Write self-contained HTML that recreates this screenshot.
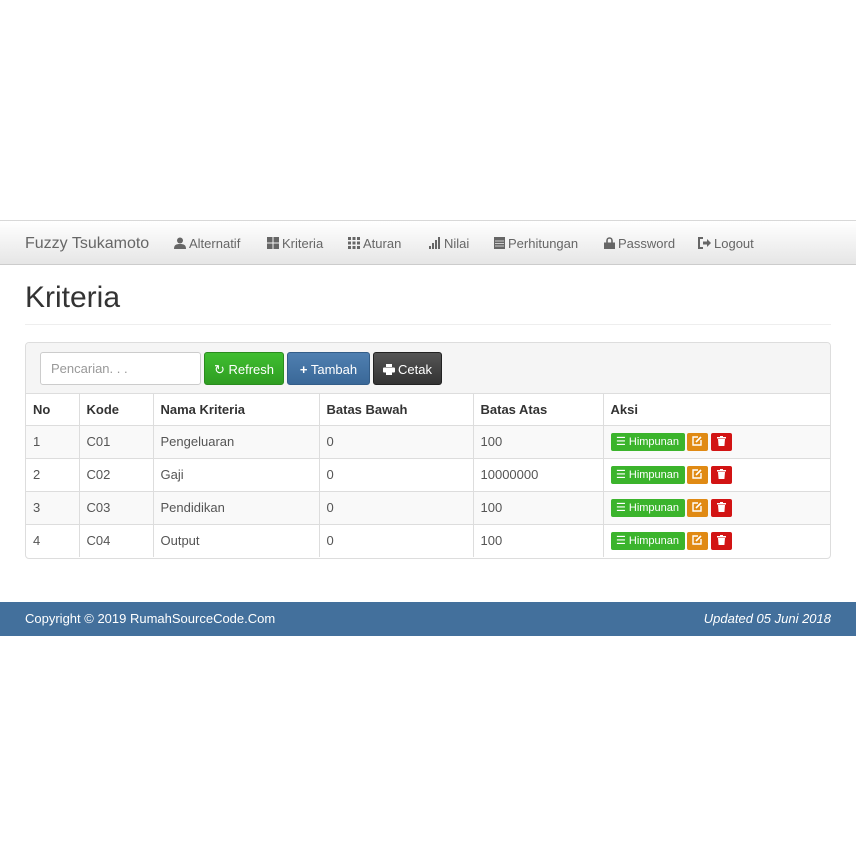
<!DOCTYPE html>
<html><head><meta charset="utf-8"><style>
*{box-sizing:border-box;margin:0;padding:0}
body{width:856px;height:856px;background:#fff;font-family:"Liberation Sans",sans-serif;color:#333;position:relative;overflow:hidden}
.nav{position:absolute;top:220px;left:0;width:856px;height:45px;background:linear-gradient(#fff,#e6e6e6);border-top:1px solid #d8d8d8;border-bottom:1px solid #ccc}
.nav span{position:absolute;top:0;line-height:45px;font-size:13px;color:#666;white-space:nowrap}
.nav .brand{font-size:16px;color:#666}
.ic{display:inline-block;vertical-align:-1px;margin-right:3px}
h1{position:absolute;left:25px;top:281px;font-size:30px;font-weight:normal;color:#333}
.hr{position:absolute;left:25px;top:324px;width:806px;border-top:1px solid #eee}
.panel{position:absolute;left:25px;top:342px;width:806px;height:217px;border:1px solid #ddd;border-radius:4px;background:#fff;overflow:hidden}
.ph{height:51px;background:#f5f5f5;border-bottom:1px solid #ddd;position:relative}
.inp{position:absolute;left:14px;top:9px;width:161px;height:33px;border:1px solid #ccc;border-radius:3px;background:#fff;font-size:13px;color:#999;padding:8px 10px}
.btn{position:absolute;top:9px;height:33px;border-radius:3px;color:#fff;font-size:13px;line-height:33px;text-align:center}
table{border-collapse:collapse;width:804px;font-size:13px}
td,th{border-right:1px solid #ddd;border-bottom:1px solid #ddd;padding:0 7px;text-align:left;vertical-align:middle}
td:last-child,th:last-child{border-right:none}
th{height:31px;font-weight:bold;color:#333}
td{height:33px;color:#555}
tr.o td{background:#f9f9f9}
tr:last-child td{border-bottom:none}
.sb{display:inline-block;height:18px;border-radius:2px;color:#fff;font-size:11px;line-height:18px;vertical-align:middle;text-align:center}
.foot{position:absolute;top:602px;left:0;width:856px;height:34px;background:#43709c;color:#fff;font-size:13px;line-height:34px}
</style></head><body>
<div class="nav">
<span class="brand" style="left:25px">Fuzzy Tsukamoto</span>
<span style="left:174px"><svg class="ic" width="12" height="12" viewBox="0 0 12 12"><circle cx="6" cy="3.5" r="3" fill="#666"/><path d="M0 12c0-4 2-5 6-5s6 1 6 5z" fill="#666"/></svg>Alternatif</span>
<span style="left:267px"><svg class="ic" width="12" height="12" viewBox="0 0 12 12" fill="#666"><rect x="0" y="0" width="5.5" height="5.5"/><rect x="6.5" y="0" width="5.5" height="5.5"/><rect x="0" y="6.5" width="5.5" height="5.5"/><rect x="6.5" y="6.5" width="5.5" height="5.5"/></svg>Kriteria</span>
<span style="left:348px"><svg class="ic" width="12" height="12" viewBox="0 0 12 12" fill="#666"><rect x="0" y="0" width="3" height="3"/><rect x="4.5" y="0" width="3" height="3"/><rect x="9" y="0" width="3" height="3"/><rect x="0" y="4.5" width="3" height="3"/><rect x="4.5" y="4.5" width="3" height="3"/><rect x="9" y="4.5" width="3" height="3"/><rect x="0" y="9" width="3" height="3"/><rect x="4.5" y="9" width="3" height="3"/><rect x="9" y="9" width="3" height="3"/></svg>Aturan</span>
<span style="left:429px"><svg class="ic" width="12" height="12" viewBox="0 0 12 12" fill="#666"><rect x="0" y="9" width="2" height="3"/><rect x="3" y="6" width="2" height="6"/><rect x="6" y="3" width="2" height="9"/><rect x="9" y="0" width="2" height="12"/></svg>Nilai</span>
<span style="left:494px"><svg class="ic" width="11" height="12" viewBox="0 0 11 12" fill="#666"><rect x="0" y="0" width="11" height="12"/><path d="M1 4h9M1 6.5h9M1 9h9" stroke="#eee" stroke-width=".8"/></svg>Perhitungan</span>
<span style="left:604px"><svg class="ic" width="11" height="12" viewBox="0 0 11 12"><path d="M3 6V3.5a2.5 2.5 0 015 0V6" stroke="#666" stroke-width="1.6" fill="none"/><rect x="0" y="5.5" width="11" height="6.5" fill="#666"/></svg>Password</span>
<span style="left:698px"><svg class="ic" width="13" height="12" viewBox="0 0 13 12"><path d="M5 1H1v10h4" stroke="#666" stroke-width="2" fill="none"/><path d="M5 4.5h4V2l4 4-4 4V7.5H5z" fill="#666"/></svg>Logout</span>
</div>
<h1>Kriteria</h1>
<div class="hr"></div>
<div class="panel">
<div class="ph">
<div class="inp">Pencarian. . .</div>
<div class="btn" style="left:178px;width:80px;background:linear-gradient(#3fbe30,#2f9d22);border:1px solid #2a8b1e">&#x21bb; Refresh</div>
<div class="btn" style="left:261px;width:83px;background:linear-gradient(#4f7fb0,#3a6898);border:1px solid #335d88"><b>+</b> Tambah</div>
<div class="btn" style="left:347px;width:69px;background:linear-gradient(#555,#333);border:1px solid #222"><svg class="ic" width="12" height="11" viewBox="0 0 12 11" fill="#fff"><rect x="3" y="0" width="6" height="3"/><rect x="0" y="3.5" width="12" height="5" rx="1"/><rect x="3" y="7" width="6" height="4"/></svg>Cetak</div>
</div>
<table>
<tr><th style="width:53px">No</th><th style="width:74px">Kode</th><th style="width:166px">Nama Kriteria</th><th style="width:154px">Batas Bawah</th><th style="width:130px">Batas Atas</th><th>Aksi</th></tr>
<tr class="o"><td>1</td><td>C01</td><td>Pengeluaran</td><td>0</td><td>100</td><td><span class="sb" style="width:74px;background:#3bb42c">&#9776; Himpunan</span><span class="sb" style="width:21px;background:#e08a14;margin-left:2px"><svg width="10" height="10" viewBox="0 0 10 10" style="vertical-align:-1px"><path d="M6 1H1v8h8V4" stroke="#fff" stroke-width="1.4" fill="none"/><path d="M4 6l5-5" stroke="#fff" stroke-width="1.6"/></svg></span><span class="sb" style="width:21px;background:#d21414;margin-left:3px"><svg width="9" height="10" viewBox="0 0 9 10" style="vertical-align:-1px" fill="#fff"><rect x="0" y="1" width="9" height="1.5"/><rect x="3" y="0" width="3" height="1"/><path d="M1 3h7l-.6 7H1.6z"/></svg></span></td></tr>
<tr><td>2</td><td>C02</td><td>Gaji</td><td>0</td><td>10000000</td><td><span class="sb" style="width:74px;background:#3bb42c">&#9776; Himpunan</span><span class="sb" style="width:21px;background:#e08a14;margin-left:2px"><svg width="10" height="10" viewBox="0 0 10 10" style="vertical-align:-1px"><path d="M6 1H1v8h8V4" stroke="#fff" stroke-width="1.4" fill="none"/><path d="M4 6l5-5" stroke="#fff" stroke-width="1.6"/></svg></span><span class="sb" style="width:21px;background:#d21414;margin-left:3px"><svg width="9" height="10" viewBox="0 0 9 10" style="vertical-align:-1px" fill="#fff"><rect x="0" y="1" width="9" height="1.5"/><rect x="3" y="0" width="3" height="1"/><path d="M1 3h7l-.6 7H1.6z"/></svg></span></td></tr>
<tr class="o"><td>3</td><td>C03</td><td>Pendidikan</td><td>0</td><td>100</td><td><span class="sb" style="width:74px;background:#3bb42c">&#9776; Himpunan</span><span class="sb" style="width:21px;background:#e08a14;margin-left:2px"><svg width="10" height="10" viewBox="0 0 10 10" style="vertical-align:-1px"><path d="M6 1H1v8h8V4" stroke="#fff" stroke-width="1.4" fill="none"/><path d="M4 6l5-5" stroke="#fff" stroke-width="1.6"/></svg></span><span class="sb" style="width:21px;background:#d21414;margin-left:3px"><svg width="9" height="10" viewBox="0 0 9 10" style="vertical-align:-1px" fill="#fff"><rect x="0" y="1" width="9" height="1.5"/><rect x="3" y="0" width="3" height="1"/><path d="M1 3h7l-.6 7H1.6z"/></svg></span></td></tr>
<tr><td>4</td><td>C04</td><td>Output</td><td>0</td><td>100</td><td><span class="sb" style="width:74px;background:#3bb42c">&#9776; Himpunan</span><span class="sb" style="width:21px;background:#e08a14;margin-left:2px"><svg width="10" height="10" viewBox="0 0 10 10" style="vertical-align:-1px"><path d="M6 1H1v8h8V4" stroke="#fff" stroke-width="1.4" fill="none"/><path d="M4 6l5-5" stroke="#fff" stroke-width="1.6"/></svg></span><span class="sb" style="width:21px;background:#d21414;margin-left:3px"><svg width="9" height="10" viewBox="0 0 9 10" style="vertical-align:-1px" fill="#fff"><rect x="0" y="1" width="9" height="1.5"/><rect x="3" y="0" width="3" height="1"/><path d="M1 3h7l-.6 7H1.6z"/></svg></span></td></tr>
</table>
</div>
<div class="foot"><span style="position:absolute;left:25px">Copyright © 2019 RumahSourceCode.Com</span><span style="position:absolute;right:25px;font-style:italic">Updated 05 Juni 2018</span></div>
</body></html>
